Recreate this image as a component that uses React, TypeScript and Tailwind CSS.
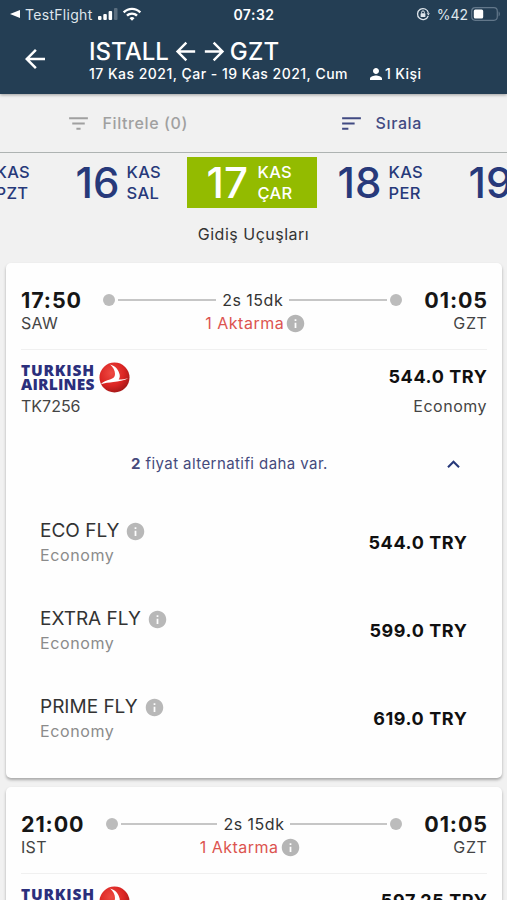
import type { ReactNode } from "react";
import {
  MdArrowBack,
  MdArrowForward,
  MdFilterList,
  MdInfo,
  MdKeyboardArrowUp,
  MdPerson,
  MdSort,
  MdWifi,
} from "react-icons/md";

type Fare = { name: string; cabin: string; price: string };

type Flight = {
  departure: string;
  from: string;
  arrival: string;
  to: string;
  duration: string;
  stops: string;
  code: string;
  price: string;
  cabin: string;
  fares: Fare[];
};

const days = [
  { day: "15", month: "KAS", weekday: "PZT" },
  { day: "16", month: "KAS", weekday: "SAL" },
  { day: "17", month: "KAS", weekday: "ÇAR", active: true },
  { day: "18", month: "KAS", weekday: "PER" },
  { day: "19", month: "KAS", weekday: "CUM" },
];

const flights: Flight[] = [
  {
    departure: "17:50",
    from: "SAW",
    arrival: "01:05",
    to: "GZT",
    duration: "2s 15dk",
    stops: "1 Aktarma",
    code: "TK7256",
    price: "544.0 TRY",
    cabin: "Economy",
    fares: [
      { name: "ECO FLY", cabin: "Economy", price: "544.0 TRY" },
      { name: "EXTRA FLY", cabin: "Economy", price: "599.0 TRY" },
      { name: "PRIME FLY", cabin: "Economy", price: "619.0 TRY" },
    ],
  },
  {
    departure: "21:00",
    from: "IST",
    arrival: "01:05",
    to: "GZT",
    duration: "2s 15dk",
    stops: "1 Aktarma",
    code: "TK2226",
    price: "597.25 TRY",
    cabin: "Economy",
    fares: [],
  },
];

export default function App() {
  return (
    <div className="h-[900px] w-[507px] overflow-hidden bg-[#f1f1f1] font-['Inter',sans-serif] text-[#333]">
      <Header />
      <Toolbar />
      <DayStrip />
      <h2 className="mt-[13px] text-center text-[16px] leading-[26px] tracking-[0.5px]">Gidiş Uçuşları</h2>
      <div className="mt-4 flex flex-col gap-[9px] pr-[5px] pl-[6px]">
        {flights.map((f) => (
          <FlightCard key={f.departure} flight={f} />
        ))}
      </div>
    </div>
  );
}

function Header() {
  return (
    <header className="relative h-[94px] bg-[#243e54] text-white shadow-[0_1px_3px_rgba(0,0,0,0.35)]">
      {/* Status bar */}
      <div className="grid h-7 grid-cols-3 items-center pr-[6px] pl-[10px] text-[14px] text-[#dfe6ec]">
        <div className="flex items-center">
          <svg viewBox="0 0 10 8" className="mr-[5px] h-2 w-[10px] fill-white">
            <path d="M0 4 10 0v8z" />
          </svg>
          <span className="tracking-[0.3px]">TestFlight</span>
          <SignalBars />
          <MdWifi className="ml-[4px] h-[20px] w-[20px] text-white" />
        </div>
        <div className="pr-[3px] text-center font-semibold tracking-[0.5px] text-white">07:32</div>
        <div className="flex items-center justify-end">
          <RotationLock />
          <span className="ml-[7px]">%42</span>
          <Battery />
        </div>
      </div>

      <div className="flex pt-[10px] pl-[20px]">
        <MdArrowBack className="mt-[6px] size-[30px]" />
        <div className="ml-[39px]">
          <div className="flex h-[26px] items-center pt-px text-[24px] font-medium">
            <span>ISTALL</span>
            <MdArrowBack className="ml-[2px] size-[29px]" />
            <MdArrowForward className="size-[29px]" />
            <span className="ml-[1px] tracking-[0.2px]">GZT</span>
          </div>
          <div className="flex h-[19px] items-center text-[14px] font-medium">
            <span className="tracking-[0.48px]">17 Kas 2021, Çar - 19 Kas 2021, Cum</span>
            <MdPerson className="ml-[19px] size-[18px]" />
            <span className="tracking-[0.4px]">1 Kişi</span>
          </div>
        </div>
      </div>
    </header>
  );
}

function SignalBars() {
  return (
    <svg viewBox="0 0 20 12" className="ml-[5px] h-3 w-5 fill-white">
      <rect x="0" y="8" width="3.5" height="4" rx="1" />
      <rect x="5.3" y="6" width="3.5" height="6" rx="1" />
      <rect x="10.6" y="3" width="3.5" height="9" rx="1" />
      <rect x="16" y="0" width="3.5" height="12" rx="1" opacity="0.25" />
    </svg>
  );
}

function RotationLock() {
  return (
    <svg viewBox="0 0 14 14" className="size-[14px]" fill="none" stroke="currentColor" strokeWidth="1.3">
      <path d="M12.4 5.8A5.5 5.5 0 1 0 12.2 9" />
      <path d="M10.6 6.2h3.2L12.5 8.6z" fill="currentColor" stroke="none" />
      <rect x="4.6" y="6.3" width="4.8" height="3.7" rx="0.6" fill="currentColor" stroke="none" />
      <path d="M5.6 6.4V5.3a1.4 1.4 0 0 1 2.8 0v1.1" strokeWidth="1" />
    </svg>
  );
}

function Battery() {
  return (
    <svg viewBox="0 0 30 14" className="ml-[3px] h-[14px] w-[30px]">
      <rect x="0.7" y="0.7" width="25.6" height="12.6" rx="3.5" fill="none" stroke="#62778a" strokeWidth="1.2" />
      <rect x="2.8" y="2.6" width="9.4" height="8.8" rx="1.5" fill="#fff" />
      <path d="M27.6 4.6c1.6.6 1.6 4.2 0 4.8z" fill="#62778a" />
    </svg>
  );
}

function Toolbar() {
  return (
    <div className="grid h-[59px] grid-cols-2 border-b border-[#aeb3b2] text-[16px] font-medium tracking-[0.6px]">
      <button className="flex items-center justify-center text-[#a0a0a0]">
        <MdFilterList className="mr-[12px] size-[25px]" />
        Filtrele (0)
      </button>
      <button className="flex items-center justify-center text-[#414a82]">
        <MdSort className="mr-[12px] size-[25px]" />
        Sırala
      </button>
    </div>
  );
}

function DayStrip() {
  return (
    <div className="mt-1 flex justify-center gap-px overflow-hidden pr-[4px]">
      {days.map((d) => (
        <div
          key={d.day}
          className={`flex h-[51px] w-[130px] shrink-0 items-center pl-[20px] font-medium ${
            d.active ? "bg-[#93bb00] text-white" : "text-[#27397a]"
          }`}
        >
          <span className="w-[51px] text-[42px] leading-[51px]">{d.day}</span>
          <span className="text-[16.5px] leading-[21px] tracking-[0.3px]">
            {d.month}
            <br />
            {d.weekday}
          </span>
        </div>
      ))}
    </div>
  );
}

function FlightCard({ flight }: { flight: Flight }) {
  return (
    <article className="rounded-[5px] bg-[#fefefe] px-[15px] pb-[15px] shadow-[0_2px_3px_rgba(0,0,0,0.3)]">
      <div className="flex items-center pt-[25px] leading-[24px]">
        <Time>{flight.departure}</Time>
        <Dot className="ml-[22px]" />
        <Line className="ml-[3px]" />
        <span className="px-[6px] text-[16px] tracking-[0.5px]">{flight.duration}</span>
        <Line className="mr-[3px]" />
        <Dot className="mr-[22px]" />
        <Time>{flight.arrival}</Time>
      </div>
      <div className="flex h-[22px] items-center justify-between text-[16px] text-[#444]">
        <span className="tracking-[0.3px]">{flight.from}</span>
        <span className="flex items-center tracking-[0.5px] text-[#dc5450]">
          {flight.stops}
          <MdInfo className="ml-px size-[21px] text-[#b5b5b5]" />
        </span>
        <span className="-mr-[0.5px] tracking-[0.6px]">{flight.to}</span>
      </div>

      <div className="mt-[15px] flex justify-between border-t border-[#f0f0f0] pt-[11px]">
        <div>
          <AirlineLogo />
          <div className="text-[16px] leading-[24px] text-[#444]">{flight.code}</div>
        </div>
        <div className="text-right">
          <Price>{flight.price}</Price>
          <div className="text-[16px] leading-[26px] tracking-[0.5px] text-[#444]">{flight.cabin}</div>
        </div>
      </div>

      {flight.fares.length > 0 && (
        <>
          <div className="mt-[33px] flex h-6 items-center pr-[21px] pl-[110px] text-[15px] tracking-[0.42px] text-[#454a7c]">
            <span>
              <b className="font-bold">2</b> fiyat alternatifi daha var.
            </span>
            <MdKeyboardArrowUp className="ml-auto size-[25px] text-[#27397a]" />
          </div>
          <div className="mt-[23px]">
            {flight.fares.map((fare) => (
              <div key={fare.name} className="flex h-[88px] items-center justify-between pr-5 pl-[19px]">
                <div>
                  <div className="flex h-[24px] items-center pt-px text-[19px]">
                    {fare.name}
                    <MdInfo className="ml-[6px] size-[21px] text-[#b8b8b8]" />
                  </div>
                  <div className="text-[16px] leading-[25px] tracking-[0.6px] text-[#8b8b8b]">{fare.cabin}</div>
                </div>
                <Price>{fare.price}</Price>
              </div>
            ))}
          </div>
        </>
      )}
    </article>
  );
}

function Time({ children }: { children: ReactNode }) {
  return <span className="-mr-px text-[21.5px] font-bold tracking-[0.9px] text-[#161616]">{children}</span>;
}

function Price({ children }: { children: ReactNode }) {
  return (
    <div className="-mr-[0.5px] text-[18px] leading-[32px] font-bold tracking-[0.6px] text-[#101010]">{children}</div>
  );
}

function Dot({ className }: { className: string }) {
  return <span className={`size-[12px] shrink-0 rounded-full bg-[#bcbcbc] ${className}`} />;
}

function Line({ className }: { className: string }) {
  return <span className={`h-[2px] flex-1 bg-[#c6c6c6] ${className}`} />;
}

function AirlineLogo() {
  return (
    <div className="flex h-[33px] items-center gap-[4px]">
      <div className="w-[74px] font-['Open_Sans',sans-serif] text-[15.5px] leading-[13.5px] font-extrabold whitespace-nowrap text-[#2b2f7c]">
        <div className="tracking-[0.8px]">TURKISH</div>
        <div className="tracking-[0.2px]">AIRLINES</div>
      </div>
      <svg viewBox="0 0 32 32" className="size-[31px]">
        <defs>
          <radialGradient id="ball" cx="0.4" cy="0.35" r="0.7">
            <stop offset="0" stopColor="#ee4a42" />
            <stop offset="0.6" stopColor="#db2523" />
            <stop offset="1" stopColor="#9f1717" />
          </radialGradient>
        </defs>
        <circle cx="16" cy="16" r="15.5" fill="url(#ball)" />
        <path
          d="M11.500 2.500c5.500 1.500 8.800 5.500 9.800 10.500.4 2.200 0 3.800-1 5 3.500 0 6.700-.5 10-1.300-4.500 2.200-10 3.400-15.500 4-4.500.5-9 1-13 2.300 2.500-2.700 6-4.200 9.500-5 3.700-.8 5.200-2.400 5.200-5.500 0-3.500-1.800-7.300-5-10z"
          fill="#fff"
        />
      </svg>
    </div>
  );
}
